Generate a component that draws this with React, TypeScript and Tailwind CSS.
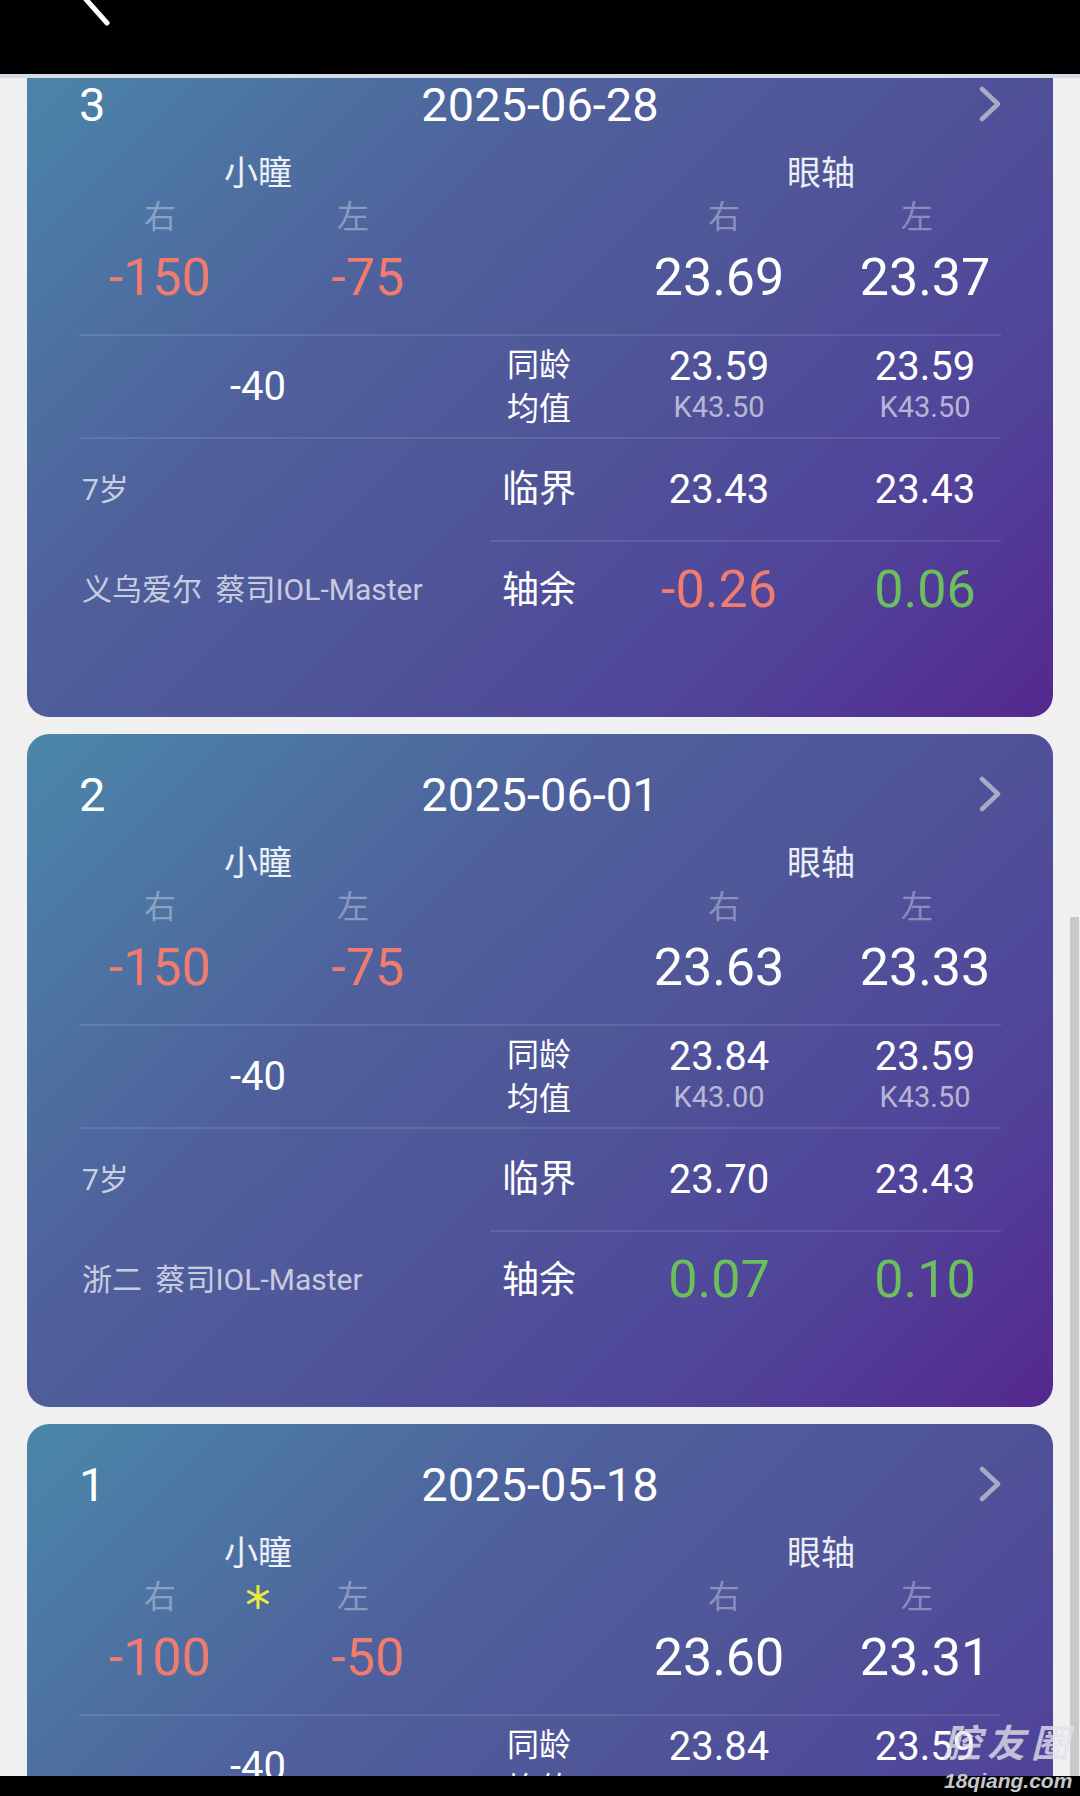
import React from 'react'

type Rec = {
    idx: number
    date: string
    star?: boolean
    pupilR: string
    pupilL: string
    axR: string
    axL: string
    mid: string
    avgR: string
    avgKR: string
    avgL: string
    avgKL: string
    age: string
    critR: string
    critL: string
    hosp: string
    remR: string
    remL: string
}

const records: Rec[] = [
    {
        idx: 3, date: '2025-06-28', pupilR: '-150', pupilL: '-75', axR: '23.69', axL: '23.37', mid: '-40',
        avgR: '23.59', avgKR: 'K43.50', avgL: '23.59', avgKL: 'K43.50', age: '7岁', critR: '23.43', critL: '23.43',
        hosp: '义乌爱尔 蔡司IOL-Master', remR: '-0.26', remL: '0.06',
    },
    {
        idx: 2, date: '2025-06-01', pupilR: '-150', pupilL: '-75', axR: '23.63', axL: '23.33', mid: '-40',
        avgR: '23.84', avgKR: 'K43.00', avgL: '23.59', avgKL: 'K43.50', age: '7岁', critR: '23.70', critL: '23.43',
        hosp: '浙二 蔡司IOL-Master', remR: '0.07', remL: '0.10',
    },
    {
        idx: 1, date: '2025-05-18', star: true, pupilR: '-100', pupilL: '-50', axR: '23.60', axL: '23.31', mid: '-40',
        avgR: '23.84', avgKR: 'K43.00', avgL: '23.59', avgKL: 'K43.50', age: '7岁', critR: '23.70', critL: '23.43',
        hosp: '浙二 蔡司IOL-Master', remR: '0.10', remL: '0.12',
    },
]

const remColor = (v: string) => (v.startsWith('-') ? 'text-[#f07b6f]' : 'text-[#6cc05c]')

const Chevron = () => (
    <svg width="22" height="36" viewBox="0 0 22 36" fill="none">
        <path d="M3 3 L19 18 L3 33" stroke="#a9abc6" strokeWidth="4.5" strokeLinecap="round" strokeLinejoin="round" />
    </svg>
)

// little yellow mark between 右 and 左
const Star = ({ show }: { show?: boolean }) => (
    <svg className={show ? '' : 'invisible'} width="24" height="24" viewBox="0 0 24 24" fill="none">
        <path d="M12 1 V23 M2.5 6.5 L21.5 17.5 M2.5 17.5 L21.5 6.5" stroke="#e9ec3f" strokeWidth="3" strokeLinecap="round" />
    </svg>
)

const cols = 'grid grid-cols-[162px_238px_120px_240px_172px] pl-[52px] items-center'

const RecordCard: React.FC<{ r: Rec }> = ({ r }) => (
    <div className="h-[673px] shrink-0 rounded-[22px] text-white pt-[32px] bg-[linear-gradient(135deg,#4a87a9_0%,#4f609c_35%,#4f5598_55%,#50449a_78%,#55288e_100%)]">
        <div className="grid grid-cols-[1fr_auto_1fr] items-center h-[56px] px-[52px] text-[47px] leading-none">
            <span>{r.idx}</span>
            <span>{r.date}</span>
            <span className="flex justify-end"><Chevron /></span>
        </div>

        <div className="grid grid-cols-[400px_120px_412px] pl-[52px] h-[44px] mt-[19px] items-center text-[34px] leading-none text-white/90">
            <span className="text-center pr-[42px]">小瞳</span>
            <span />
            <span className="text-center pl-[32px]">眼轴</span>
        </div>

        <div className={`${cols} h-[44px] text-[32px] leading-none text-white/35`}>
            <span className="text-center">右</span>
            <span className="flex items-center">
                <span className="w-[34px] flex justify-center"><Star show={r.star} /></span>
                <span className="w-[156px] text-center">左</span>
            </span>
            <span />
            <span className="text-center pl-[10px]">右</span>
            <span className="text-center pr-[16px]">左</span>
        </div>

        <div className={`${cols} h-[64px] mt-[7px] text-[52px] leading-none`}>
            <span className="text-center text-[#f07b6f]">{r.pupilR}</span>
            <span className="text-center pl-[16px] text-[#f07b6f]">{r.pupilL}</span>
            <span />
            <span className="text-center">{r.axR}</span>
            <span className="text-center">{r.axL}</span>
        </div>

        <div className="mx-[52px] mt-[24px] h-[2px] bg-white/10" />

        <div className={`${cols} h-[101px]`}>
            <span className="col-span-2 text-center pr-[42px] text-[40px] leading-none">{r.mid}</span>
            <span className="flex flex-col items-center text-[32px] leading-[44px]">
                <span>同龄</span>
                <span>均值</span>
            </span>
            <span className="flex flex-col items-center">
                <span className="text-[40px] leading-[40px]">{r.avgR}</span>
                <span className="text-[29px] leading-[40px] text-white/60">{r.avgKR}</span>
            </span>
            <span className="flex flex-col items-center">
                <span className="text-[40px] leading-[40px]">{r.avgL}</span>
                <span className="text-[29px] leading-[40px] text-white/60">{r.avgKL}</span>
            </span>
        </div>

        <div className="mx-[52px] h-[2px] bg-white/10" />

        <div className={`${cols} h-[101px]`}>
            <span className="col-span-2 pl-[3px] text-[30px] leading-none text-white/70">{r.age}</span>
            <span className="text-center text-[37px] leading-none">临界</span>
            <span className="text-center text-[40px] leading-none">{r.critR}</span>
            <span className="text-center text-[40px] leading-none">{r.critL}</span>
        </div>

        <div className="ml-[463px] mr-[52px] h-[2px] bg-white/10" />

        <div className={`${cols} h-[96px]`}>
            <span className="col-span-2 pl-[3px] text-[30px] leading-none text-white/70 whitespace-pre [word-spacing:6px]">{r.hosp}</span>
            <span className="text-center text-[37px] leading-none">轴余</span>
            <span className={`text-center text-[52px] leading-none ${remColor(r.remR)}`}>{r.remR}</span>
            <span className={`text-center text-[52px] leading-none ${remColor(r.remL)}`}>{r.remL}</span>
        </div>
    </div>
)

export default function App() {
    return (
        <div className="relative w-[1080px] h-[1796px] overflow-hidden flex flex-col bg-[#f0f0f0] font-['Roboto','Noto_Sans_CJK_SC',sans-serif]">
            <div className="h-[74px] shrink-0 bg-black flex items-start">
                <svg className="ml-[78px] overflow-visible" width="36" height="30" viewBox="0 0 36 30" fill="none">
                    <path d="M5 -4 L29 23" stroke="#ffffff" strokeWidth="5" strokeLinecap="round" />
                </svg>
            </div>
            <div className="h-[4px] shrink-0 bg-[#d5dbe2]" />

            <div className="flex-1 overflow-hidden px-[27px]">
                <div className="-mt-[34px] flex flex-col gap-[17px]">
                    {records.map((r) => (
                        <RecordCard key={r.idx} r={r} />
                    ))}
                </div>
            </div>

            <div className="h-[20px] shrink-0 bg-black" />

            {/* scrollbar thumb */}
            <div className="absolute right-[1px] top-[917px] w-[9px] h-[859px] bg-[#c9c9c9]" />

            {/* watermark */}
            <div className="absolute left-[943px] top-[1725px] text-[38px] leading-none font-bold italic tracking-[6px] text-[#e2e2ea]/80">
                腔友圈
            </div>
            <div className="absolute left-[944px] top-[1770px] text-[21px] leading-none font-bold italic text-[#c6c6ce] font-['Liberation_Sans',sans-serif]">
                18qiang.com
            </div>
        </div>
    )
}
